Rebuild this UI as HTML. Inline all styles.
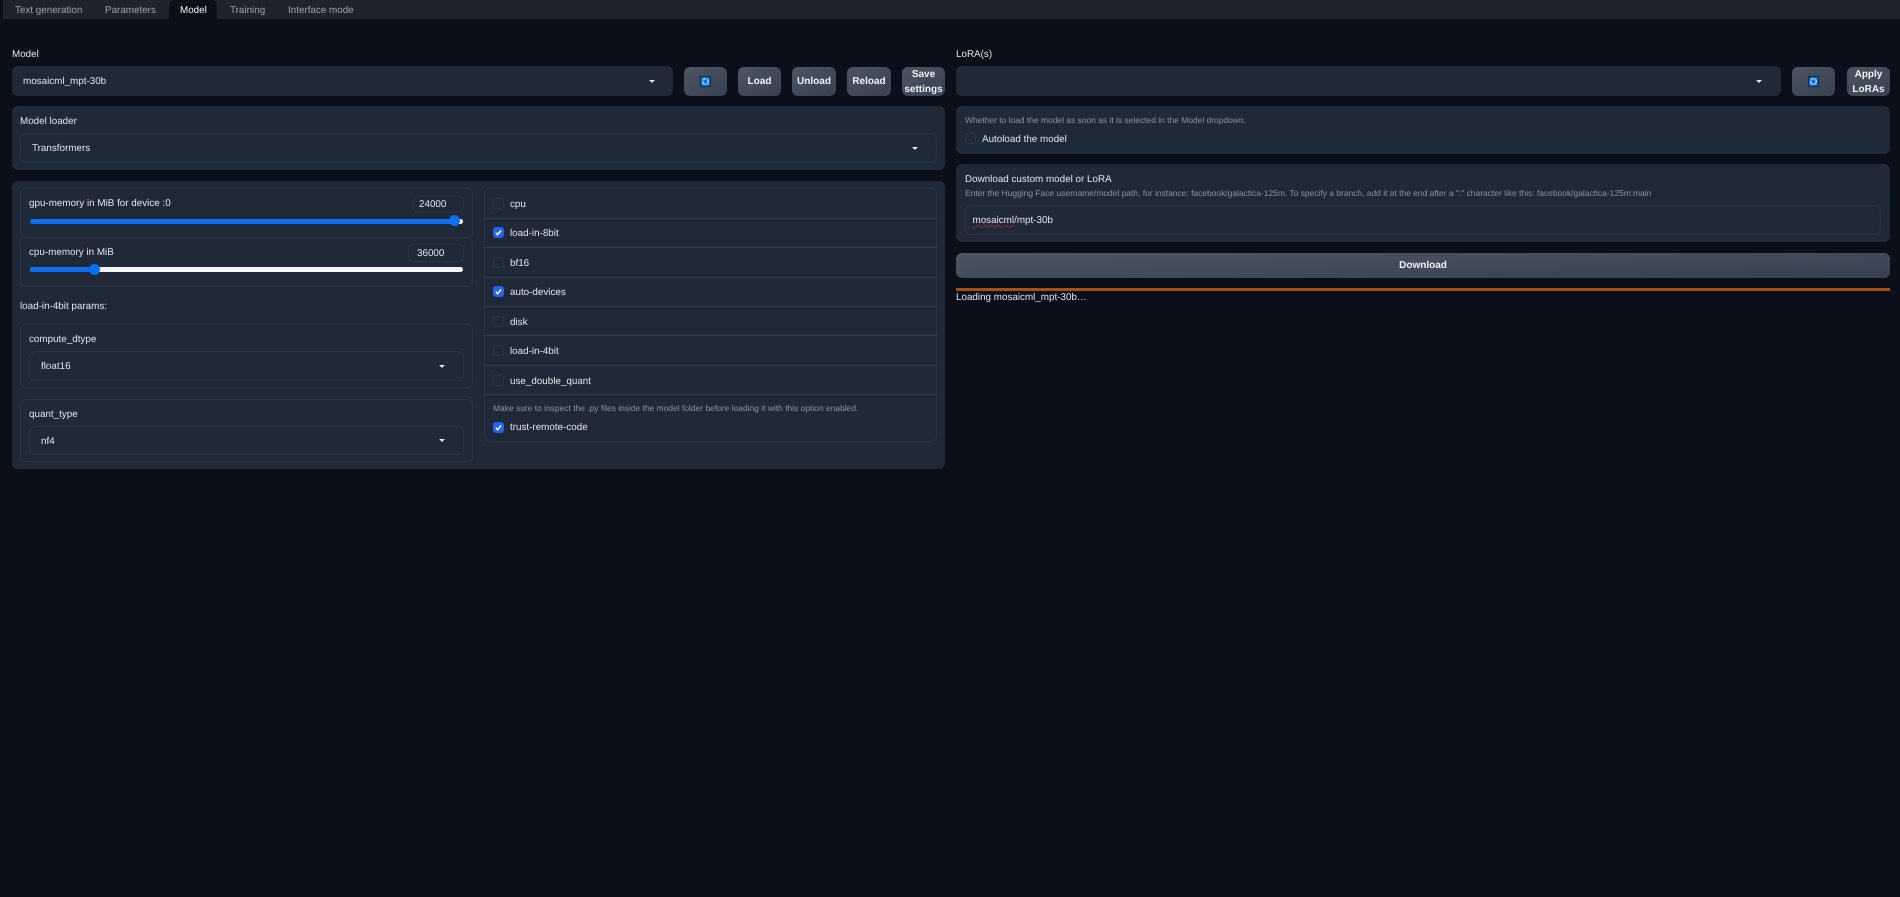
<!DOCTYPE html>
<html><head><meta charset="utf-8"><title>Model</title>
<style>
*{box-sizing:border-box}
html,body{margin:0;padding:0;width:1900px;height:897px;overflow:hidden;background:#0b0f19}
body{font-family:"Liberation Sans",sans-serif;font-size:10px;color:#e5e7eb;position:relative;text-rendering:geometricPrecision}
.a{position:absolute}
.t{position:absolute;white-space:nowrap;line-height:14px;font-size:9.85px}
.block{position:absolute;background:#1f2937;border-radius:6px}
.in{position:absolute;background:#1f2937;border:1px solid #2a3442;border-radius:6px}
.btn{position:absolute;background:linear-gradient(to bottom right,#4b5563,#374151);border-radius:6px;color:#f3f4f6;font-weight:bold;font-size:10px;line-height:14.5px;display:flex;align-items:center;justify-content:center;text-align:center;padding-top:2px}
.arr{position:absolute;width:0;height:0;border-left:3px solid transparent;border-right:3px solid transparent;border-top:3.5px solid #e5e7eb}
.tab{position:absolute;top:4px;line-height:14px;font-size:9.85px;color:#9ca3af;white-space:nowrap}
.cb{position:absolute;width:11px;height:11px;border-radius:3px;border:1px solid #2c3645;background:#1f2937}
.cb.on{background:#2563eb;border-color:#2563eb}
.cb.on svg{position:absolute;left:0;top:0}
.hr{position:absolute;left:484px;width:453px;height:1px;background:#323d4d}
.desc{color:#8a94a3;font-size:8.45px}
.icon{position:absolute;width:11px;height:11px;background:#0a6fd6;border:1px solid #0b2447}
.icon svg{position:absolute;left:0;top:0}
</style></head><body>
<!-- tabs -->
<div class="a" style="left:3px;top:0;width:1897px;height:19px;background:#1f232d"></div>
<div class="a" style="left:169px;top:0;width:48px;height:20px;background:#0b0f19;border-radius:5px 5px 0 0"></div>
<div class="tab" style="left:15px">Text generation</div>
<div class="tab" style="left:105px">Parameters</div>
<div class="tab" style="left:180px;color:#f3f4f6">Model</div>
<div class="tab" style="left:230px">Training</div>
<div class="tab" style="left:288px">Interface mode</div>

<!-- Model row -->
<div class="t" style="left:12px;top:48px">Model</div>
<div class="block" style="left:12px;top:66px;width:661px;height:30px"></div>
<div class="t" style="left:23px;top:75px">mosaicml_mpt-30b</div>
<div class="arr" style="left:649px;top:80px"></div>
<div class="btn" style="left:684px;top:67px;width:43px;height:29px"></div>
<div class="icon" style="left:700px;top:76px"><svg width="9" height="9" viewBox="0 0 9 9"><circle cx="4.5" cy="4.5" r="2.8" fill="none" stroke="#cfe6ff" stroke-width="1.2" stroke-dasharray="4 0.8"/></svg></div>
<div class="btn" style="left:738px;top:67px;width:43px;height:29px">Load</div>
<div class="btn" style="left:792px;top:67px;width:44px;height:29px">Unload</div>
<div class="btn" style="left:847px;top:67px;width:44px;height:29px">Reload</div>
<div class="btn" style="left:902px;top:67px;width:43px;height:29px">Save<br>settings</div>

<!-- Model loader -->
<div class="block" style="left:12px;top:106px;width:933px;height:64px"></div>
<div class="t" style="left:20px;top:115px">Model loader</div>
<div class="in" style="left:20px;top:133px;width:917px;height:30px"></div>
<div class="t" style="left:32px;top:142px">Transformers</div>
<div class="arr" style="left:912px;top:147px"></div>

<!-- Big panel -->
<div class="block" style="left:12px;top:181px;width:933px;height:288px"></div>
<div class="in" style="left:20px;top:188px;width:453px;height:50px"></div>
<div class="t" style="left:29px;top:197px">gpu-memory in MiB for device :0</div>
<div class="in" style="left:413px;top:196px;width:51px;height:17px"></div>
<div class="t" style="left:419px;top:198px">24000</div>
<div class="a" style="left:30px;top:218.5px;width:433px;height:5px;background:#0a6ff0;border-radius:3px"></div>
<div class="a" style="left:458px;top:218.5px;width:5px;height:5px;background:#f3f4f6;border-radius:0 3px 3px 0"></div>
<div class="a" style="left:449px;top:215px;width:11px;height:11px;background:#0a6ff0;border-radius:50%"></div>

<div class="in" style="left:20px;top:237px;width:453px;height:50px"></div>
<div class="t" style="left:29px;top:246px">cpu-memory in MiB</div>
<div class="in" style="left:408px;top:244px;width:56px;height:18px"></div>
<div class="t" style="left:417px;top:247px">36000</div>
<div class="a" style="left:30px;top:267px;width:433px;height:5px;background:#f3f4f6;border-radius:3px"></div>
<div class="a" style="left:30px;top:267px;width:65px;height:5px;background:#0a6ff0;border-radius:3px 0 0 3px"></div>
<div class="a" style="left:89px;top:264px;width:11px;height:11px;background:#0a6ff0;border-radius:50%"></div>

<div class="t" style="left:20px;top:300px">load-in-4bit params:</div>

<div class="in" style="left:20px;top:324px;width:453px;height:64px"></div>
<div class="t" style="left:29px;top:333px">compute_dtype</div>
<div class="in" style="left:29px;top:351px;width:435px;height:30px"></div>
<div class="t" style="left:41px;top:360px">float16</div>
<div class="arr" style="left:439px;top:365px"></div>

<div class="in" style="left:20px;top:399px;width:453px;height:63px"></div>
<div class="t" style="left:29px;top:408px">quant_type</div>
<div class="in" style="left:29px;top:426px;width:435px;height:29px"></div>
<div class="t" style="left:41px;top:435px">nf4</div>
<div class="arr" style="left:439px;top:439px"></div>

<!-- checkbox group -->
<div class="in" style="left:484px;top:188px;width:453px;height:254px;border-radius:6px"></div>
<div class="hr" style="top:218px"></div>
<div class="hr" style="top:247px"></div>
<div class="hr" style="top:277px"></div>
<div class="hr" style="top:306px"></div>
<div class="hr" style="top:335px"></div>
<div class="hr" style="top:365px"></div>
<div class="hr" style="top:394px"></div>

<div class="cb" style="left:493px;top:198px"></div><div class="t" style="left:510px;top:198px">cpu</div>
<div class="cb on" style="left:493px;top:227px"><svg width="9" height="9" viewBox="0 0 9 9"><path d="M1.8 4.8 L3.6 6.6 L7.2 2.4" fill="none" stroke="#fff" stroke-width="1.5"/></svg></div><div class="t" style="left:510px;top:227px">load-in-8bit</div>
<div class="cb" style="left:493px;top:257px"></div><div class="t" style="left:510px;top:257px">bf16</div>
<div class="cb on" style="left:493px;top:286px"><svg width="9" height="9" viewBox="0 0 9 9"><path d="M1.8 4.8 L3.6 6.6 L7.2 2.4" fill="none" stroke="#fff" stroke-width="1.5"/></svg></div><div class="t" style="left:510px;top:286px">auto-devices</div>
<div class="cb" style="left:493px;top:316px"></div><div class="t" style="left:510px;top:316px">disk</div>
<div class="cb" style="left:493px;top:345px"></div><div class="t" style="left:510px;top:345px">load-in-4bit</div>
<div class="cb" style="left:493px;top:375px"></div><div class="t" style="left:510px;top:375px">use_double_quant</div>
<div class="t desc" style="left:493px;top:401px">Make sure to inspect the .py files inside the model folder before loading it with this option enabled.</div>
<div class="cb on" style="left:493px;top:422px"><svg width="9" height="9" viewBox="0 0 9 9"><path d="M1.8 4.8 L3.6 6.6 L7.2 2.4" fill="none" stroke="#fff" stroke-width="1.5"/></svg></div><div class="t" style="left:510px;top:421px">trust-remote-code</div>

<!-- Right column -->
<div class="t" style="left:956px;top:48px">LoRA(s)</div>
<div class="block" style="left:956px;top:66px;width:825px;height:30px"></div>
<div class="arr" style="left:1756px;top:80px"></div>
<div class="btn" style="left:1792px;top:67px;width:43px;height:29px"></div>
<div class="icon" style="left:1808px;top:76px"><svg width="9" height="9" viewBox="0 0 9 9"><circle cx="4.5" cy="4.5" r="2.8" fill="none" stroke="#cfe6ff" stroke-width="1.2" stroke-dasharray="4 0.8"/></svg></div>
<div class="btn" style="left:1847px;top:67px;width:43px;height:29px">Apply<br>LoRAs</div>

<div class="block" style="left:956px;top:106px;width:934px;height:48px"></div>
<div class="t desc" style="left:965px;top:113px">Whether to load the model as soon as it is selected in the Model dropdown.</div>
<div class="cb" style="left:965px;top:133px"></div>
<div class="t" style="left:982px;top:133px">Autoload the model</div>

<div class="block" style="left:956px;top:164px;width:934px;height:78px"></div>
<div class="t" style="left:965px;top:173px">Download custom model or LoRA</div>
<div class="t desc" style="left:965px;top:186px">Enter the Hugging Face username/model path, for instance: facebook/galactica-125m. To specify a branch, add it at the end after a ":" character like this: facebook/galactica-125m:main</div>
<div class="in" style="left:965px;top:205px;width:916px;height:30px"></div>
<div class="t" style="left:972.5px;top:214px"><span style="text-decoration:underline wavy #7a3040 1px;text-underline-offset:1px">mosaicml</span>/mpt-30b</div>

<div class="btn" style="left:956px;top:253px;width:934px;height:25px">Download</div>
<div class="a" style="left:956px;top:288px;width:934px;height:3px;background:#a9500f"></div>
<div class="t" style="left:956px;top:291px">Loading mosaicml_mpt-30b…</div>
</body></html>
